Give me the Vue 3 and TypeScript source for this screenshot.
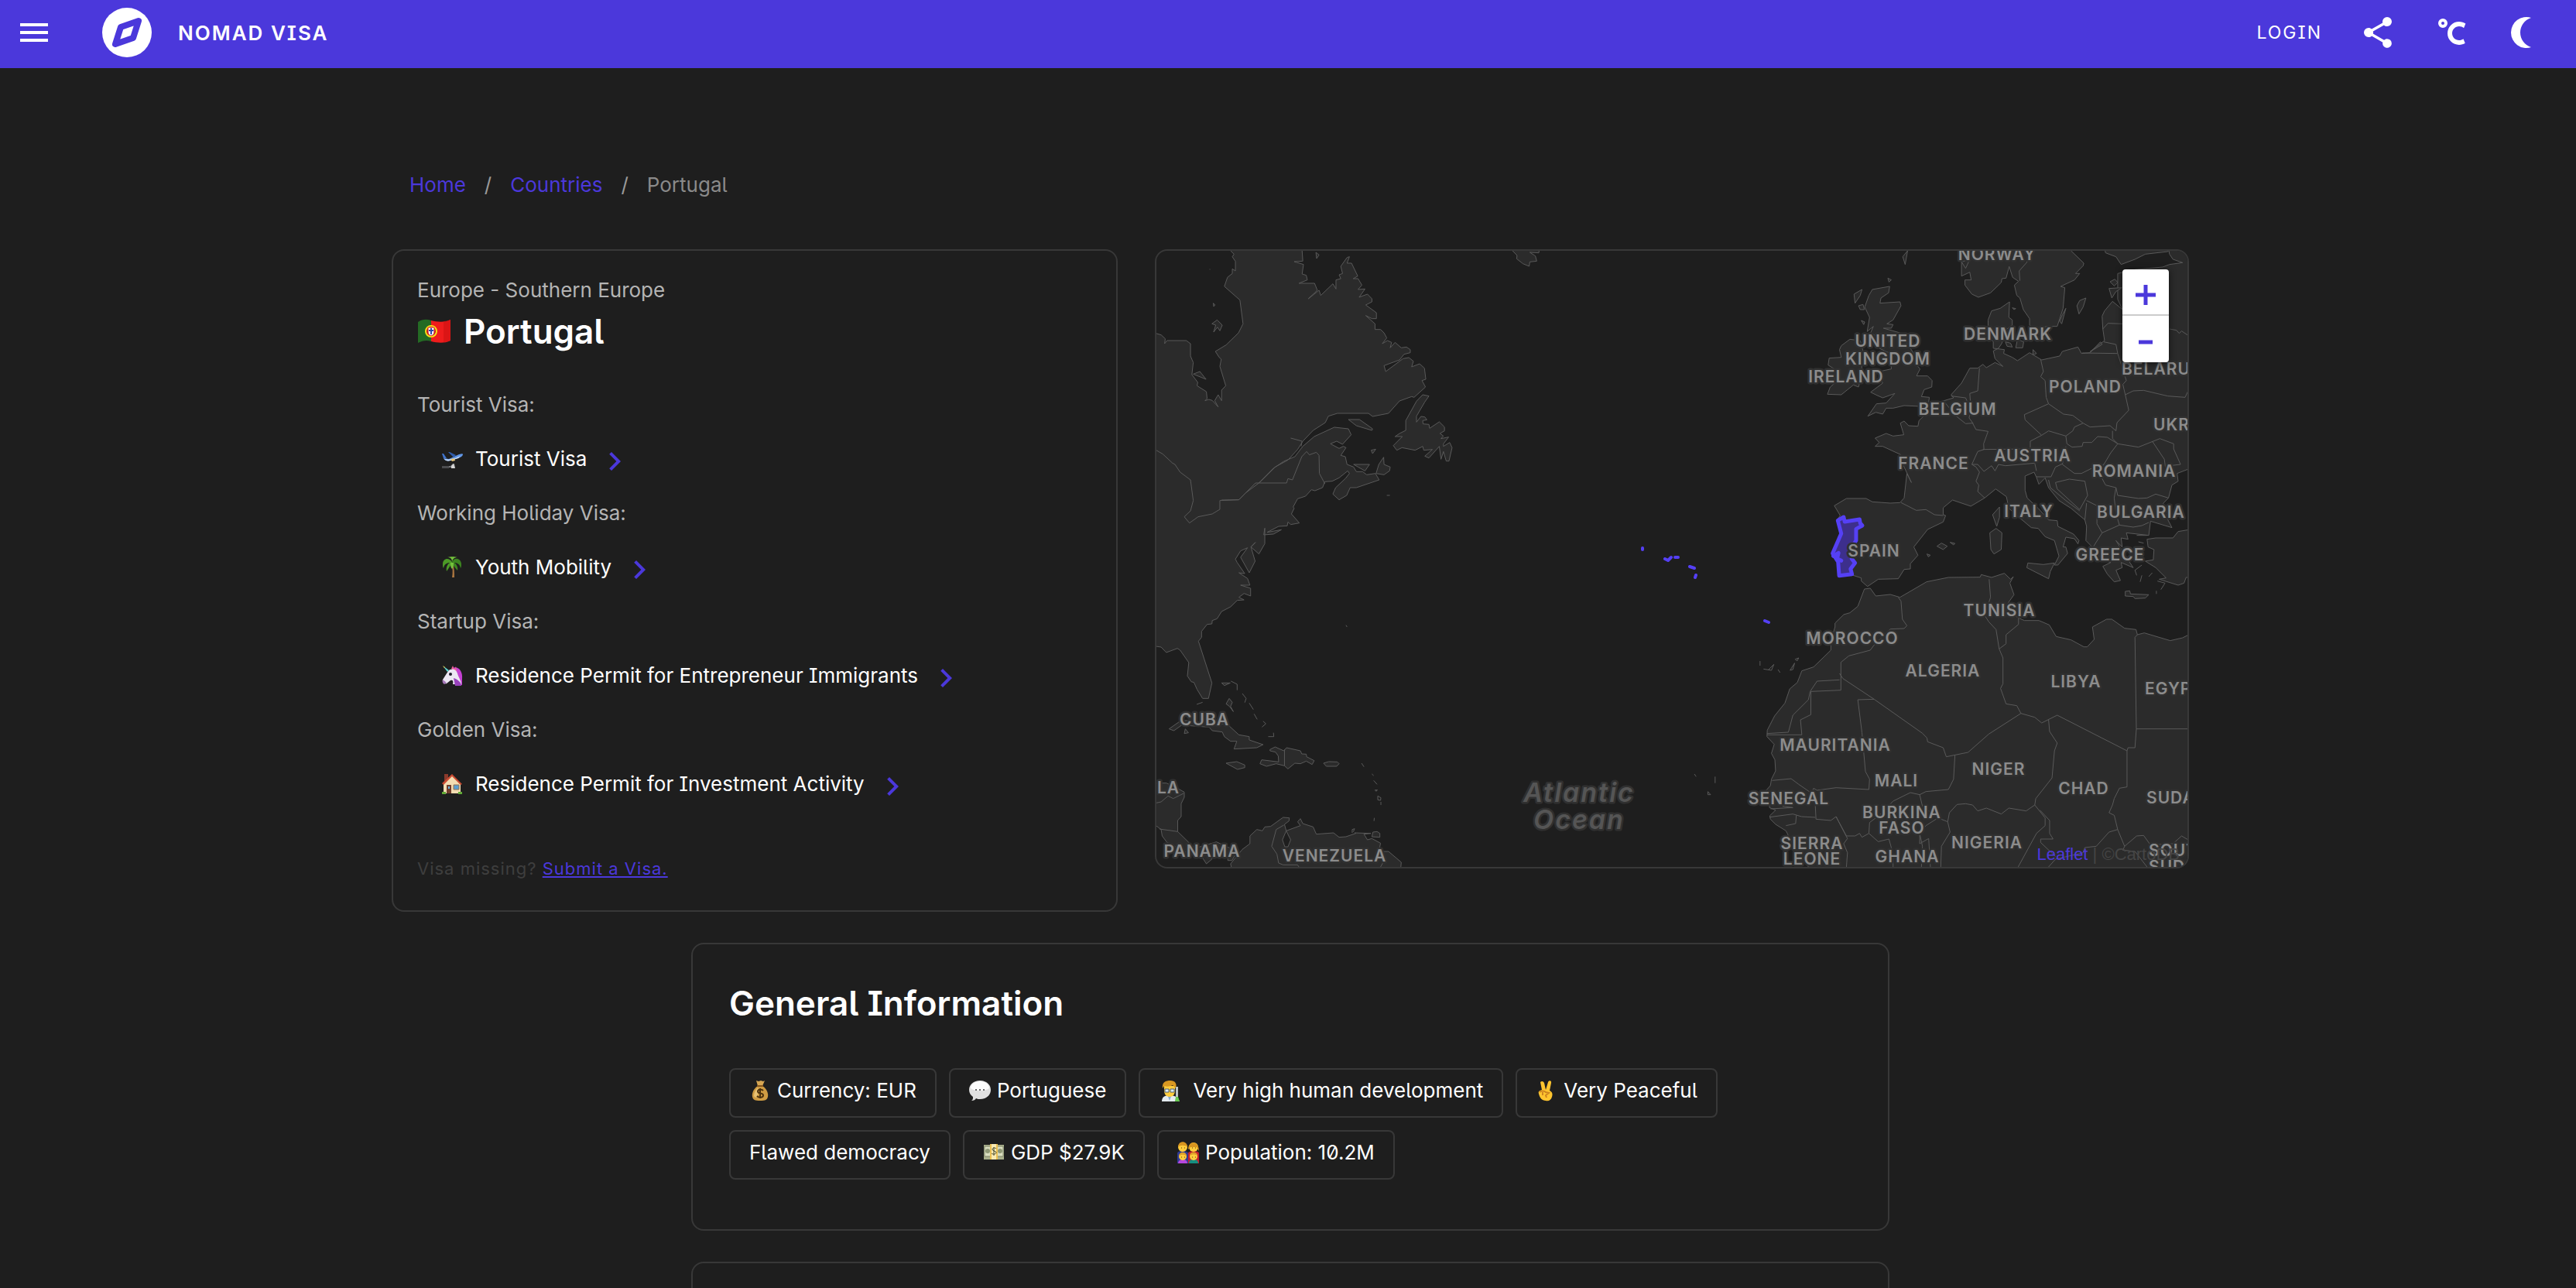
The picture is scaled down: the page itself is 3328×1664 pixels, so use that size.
<script setup lang="ts">
interface Visa {
  group: string
  name: string
  icon: string
}

interface Fact {
  text: string
  icon?: string
  wide?: boolean
}

interface MapLabel {
  text: string
  x: number
  y: number
  start?: boolean
}

const visas: Visa[] = [
  { group: 'Tourist Visa:', name: 'Tourist Visa', icon: 'plane' },
  { group: 'Working Holiday Visa:', name: 'Youth Mobility', icon: 'palm' },
  { group: 'Startup Visa:', name: 'Residence Permit for Entrepreneur Immigrants', icon: 'unicorn' },
  { group: 'Golden Visa:', name: 'Residence Permit for Investment Activity', icon: 'house' },
]

const facts: Fact[] = [
  { text: 'Currency: EUR', icon: 'moneybag' },
  { text: 'Portuguese', icon: 'speech' },
  { text: 'Very high human development', icon: 'scientist', wide: true },
  { text: 'Very Peaceful', icon: 'victory' },
  { text: 'Flawed democracy' },
  { text: 'GDP $27.9K', icon: 'cash' },
  { text: 'Population: 10.2M', icon: 'family' },
]

const labels: MapLabel[] = [
  { text: 'NORWAY', x: 2580, y: 336 },
  { text: 'DENMARK', x: 2594, y: 439 },
  { text: 'UNITED', x: 2439, y: 448 },
  { text: 'KINGDOM', x: 2439, y: 471 },
  { text: 'IRELAND', x: 2385, y: 494 },
  { text: 'BELGIUM', x: 2529, y: 536 },
  { text: 'POLAND', x: 2694, y: 507 },
  { text: 'BELARUS', x: 2741, y: 484, start: true },
  { text: 'UKRAINE', x: 2782, y: 556, start: true },
  { text: 'FRANCE', x: 2498, y: 606 },
  { text: 'AUSTRIA', x: 2626, y: 596 },
  { text: 'ROMANIA', x: 2757, y: 616 },
  { text: 'ITALY', x: 2621, y: 668 },
  { text: 'BULGARIA', x: 2766, y: 669 },
  { text: 'SPAIN', x: 2421, y: 719 },
  { text: 'GREECE', x: 2726, y: 724 },
  { text: 'TUNISIA', x: 2583, y: 796 },
  { text: 'MOROCCO', x: 2393, y: 832 },
  { text: 'ALGERIA', x: 2510, y: 874 },
  { text: 'LIBYA', x: 2682, y: 888 },
  { text: 'EGYPT', x: 2771, y: 897, start: true },
  { text: 'MAURITANIA', x: 2371, y: 970 },
  { text: 'MALI', x: 2450, y: 1016 },
  { text: 'NIGER', x: 2582, y: 1001 },
  { text: 'CHAD', x: 2692, y: 1026 },
  { text: 'SUDAN', x: 2773, y: 1038, start: true },
  { text: 'SENEGAL', x: 2311, y: 1039 },
  { text: 'BURKINA', x: 2457, y: 1057 },
  { text: 'FASO', x: 2457, y: 1077 },
  { text: 'SIERRA', x: 2341, y: 1097 },
  { text: 'LEONE', x: 2341, y: 1117 },
  { text: 'NIGERIA', x: 2567, y: 1096 },
  { text: 'GHANA', x: 2464, y: 1114 },
  { text: 'SOUTH', x: 2776, y: 1106, start: true },
  { text: 'SUDAN', x: 2776, y: 1127, start: true },
  { text: 'CUBA', x: 1556, y: 937 },
  { text: 'LA', x: 1495, y: 1025, start: true },
  { text: 'PANAMA', x: 1553, y: 1107 },
  { text: 'VENEZUELA', x: 1724, y: 1113 },
]

// Landmasses west of the Atlantic, in the western tile's units.
const westLand: string[] = [
  '246,42 256,55 251,65 260,83 260,120 251,112 251,130 237,145 228,180 273,233 282,325 269,360 233,407 202,432 213,455 219,462 215,490 232,565 220,582 220,623 210,600 200,623 210,647 193,622 183,618 172,623 178,615 176,588 149,565 151,552 134,522 138,475 130,450 130,402 118,390 62,390 55,402 57,383 45,368 20,358 20,1573 45,1578 60,1599 92,1583 100,1590 125,1638 121,1690 132,1712 140,1715 149,1742 165,1777 182,1777 192,1717 153,1555 162,1540 162,1517 178,1490 192,1488 193,1475 207,1468 220,1440 246,1422 265,1397 285,1395 270,1385 285,1370 304,1380 304,1350 275,1338 302,1338 295,1312 270,1290 287,1293 265,1250 260,1237 275,1205 295,1193 275,1230 300,1290 317,1245 305,1190 318,1172 305,1190 328,1217 345,1177 345,1117 342,1143 370,1140 393,1123 352,1133 385,1110 410,1108 412,1093 420,1103 445,1097 422,1062 430,1040 427,1035 440,1003 463,993 480,968 490,972 512,960 519,937 540,935 560,922 585,895 590,905 578,925 550,960 542,985 560,1007 582,990 592,960 610,960 676,930 665,905 640,910 628,898 610,898 602,880 583,870 578,840 565,835 580,805 572,800 560,808 535,790 553,780 570,792 595,755 587,732 546,726 488,762 455,800 432,840 400,858 370,885 328,942 345,920 375,880 412,853 440,812 455,780 485,738 520,708 529,683 555,672 645,672 657,684 703,672 735,624 770,607 777,610 810,570 800,545 811,540 807,497 793,480 770,492 775,470 762,456 745,460 695,510 690,487 735,465 748,443 766,437 766,425 755,415 740,418 722,397 708,418 712,397 700,390 685,402 698,380 690,360 680,347 664,347 664,325 637,293 655,305 668,305 668,282 637,252 655,240 655,228 642,210 618,222 635,190 615,192 626,175 615,150 601,150 614,140 596,90 583,90 590,65 583,68 565,102 570,130 560,135 565,150 551,155 551,190 542,170 507,215 502,195 471,228 497,195 489,168 444,168 468,155 465,137 453,132 457,95 430,84 455,82 453,42 453,20 246,20',
  '802,600 820,605 808,628 784,683 784,706 797,684 808,686 814,697 802,700 803,713 820,715 822,730 850,705 865,725 865,740 852,750 862,760 855,770 877,764 862,790 862,800 880,785 887,805 878,857 870,857 862,820 855,850 850,800 820,845 808,838 830,812 805,815 802,800 780,815 742,805 727,815 717,797 743,762 722,762 735,750 753,738 753,700 784,625',
  '587,696 619,696 657,732 655,738 610,720',
  '689,842 690,870 708,880 706,895 690,910 667,905 675,870',
  '602,870 648,870 635,895 615,880',
  '653,815 666,811 657,828',
  '1062,30 1062,42 1075,60 1074,73 1092,92 1110,102 1112,85 1132,82 1128,62 1112,48 1138,50 1140,30',
  '192,325 207,310 222,330 215,352 208,338 197,357 203,330',
  '138,520 157,510 175,540',
  '493,48 502,58 495,72',
  '196,245 201,252 197,258',
  '68,1895 100,1865 120,1862 200,1880 235,1875 270,1918 300,1925 300,1938 340,1956 322,1968 256,1973 264,1943 246,1943 228,1925 222,1907 193,1902 184,1888 150,1885 105,1880 82,1902',
  '115,1895 124,1910 112,1913',
  '233,2028 264,2022 287,2035 287,2045 266,2052',
  '360,1975 375,1965 400,1980 408,1968 448,1980 452,1992 465,1993 466,2003 488,2018 482,2033 465,2020 448,2030 432,2028 412,2050 402,2038 378,2030 350,2040 331,2030 336,2015 385,2023 384,2000 376,1985 360,1980',
  '515,2028 530,2022 555,2023 560,2030 553,2040 523,2040',
  '220,1717 245,1717 228,1727',
  '242,1777 251,1792 246,1808 254,1828 243,1808 233,1798',
  '658,2295 670,2293 678,2300 678,2315 655,2313',
  '20,2105 60,2105 85,2120 112,2140 112,2160 103,2185 103,2235 93,2250 93,2293 125,2335 122,2348 150,2355 205,2333 265,2370 250,2405 238,2405 238,2390 190,2375 192,2400 176,2418 165,2395 120,2375 62,2335 48,2310 45,2285 20,2260',
  '250,2440 246,2418 280,2362 302,2340 302,2310 322,2285 338,2290 345,2275 362,2273 398,2238 416,2240 415,2252 402,2265 407,2290 448,2270 440,2255 448,2243 455,2262 485,2275 494,2303 544,2298 560,2315 580,2313 608,2300 605,2298 652,2300 632,2303 642,2325 655,2320 680,2338 675,2370 703,2370 740,2412 738,2440',
]

const westBorders: string[] = [
  '20,805 31,815 50,830 78,865 85,870 100,900 130,930 138,1010 130,1050 112,1073 127,1097 152,1073 193,1062 215,1044 215,1010 270,1007 318,942 408,942 412,925 425,930 452,840 466,820 474,833 494,823 502,835 503,905 519,945',
  '220,1008 270,1007 290,980 328,942',
  '420,768 453,780 450,800',
  '402,1975 402,2038',
  '280,1758 291,1777 287,1793',
  '265,1745 265,1722 247,1710',
  '300,1795 312,1820',
  '314,1837 323,1858',
  '340,1865 348,1875 337,1888',
  '355,1925 371,1925 370,1910',
  '598,2298 598,2285 605,2282 601,2294',
  '625,2028 632,2042',
  '655,2070 660,2076',
  '660,2095 670,2110',
  '664,2132 671,2132 667,2137 664,2132',
  '672,2155 681,2162 680,2172 672,2170 672,2155',
  '681,2178 681,2190',
  '662,2240 661,2252',
  '148,1800 165,1792',
  '580,1493 583,1500',
  '20,2185 45,2178 65,2155 80,2165 110,2145',
  '40,2283 93,2293',
  '400,2268 378,2285 365,2350 380,2380 385,2415 398,2422 440,2422 448,2440',
  '675,2370 695,2395 680,2430',
  '698,990 707,990',
  '185,114 187,114',
]

// Europe and Africa, in the eastern tile's units.
const eastLand: string[] = [
  '838,20 838,140 862,125 866,155 848,155 848,175 868,210 887,222 922,205 953,165 955,150 967,148 976,103 986,145 1003,160 991,175 998,215 1007,225 1017,270 1035,305 1035,330 1052,350 1070,345 1083,335 1115,335 1132,265 1137,185 1125,180 1165,155 1180,130 1168,130 1190,100 1192,90 1155,42 1155,20',
  '1250,20 1255,50 1285,65 1300,95 1340,75 1370,55 1435,45 1445,20',
  '1435,20 1440,55 1450,75 1478,88 1440,95 1420,105 1340,115 1290,130 1290,230 1304,270 1275,238 1252,275 1245,295 1247,345 1252,390 1210,433 1245,405 1240,395 1210,437 1185,440 1175,415 1130,432 1122,450 1070,465 1035,437 1000,468 985,455 960,440 962,425 930,420 930,395 915,370 915,310 925,275 950,265 977,240 975,300 985,310 985,330 965,350 955,400 945,420 930,430 935,460 958,490 935,475 910,495 900,482 885,497 862,497 838,555 808,600 815,612 770,630 715,700 712,722 685,720 672,702 661,710 671,755 640,760 620,750 588,768 600,785 588,800 610,800 662,832 672,880 693,940 680,905 672,1000 660,1018 632,1020 580,1015 562,1002 505,1002 470,1030 487,1068 478,1085 490,1140 465,1215 480,1245 482,1302 520,1298 548,1310 548,1322 566,1343 597,1315 655,1313 672,1277 690,1275 690,1255 712,1222 700,1190 740,1122 785,1093 792,1068 785,1065 785,1038 812,1008 865,1032 905,1000 937,965 968,995 975,1040 1000,1070 1040,1115 1060,1118 1080,1150 1107,1165 1120,1225 1107,1260 1117,1260 1145,1215 1140,1190 1132,1190 1140,1152 1165,1158 1175,1178 1178,1165 1162,1140 1117,1110 1115,1088 1090,1085 1060,1040 1028,1000 1022,970 1022,915 1048,900 1055,920 1062,947 1080,922 1090,960 1120,1010 1155,1040 1195,1085 1200,1110 1198,1165 1220,1195 1245,1240 1270,1250 1247,1265 1260,1295 1280,1325 1298,1320 1285,1280 1303,1270 1300,1250 1335,1270 1315,1230 1285,1165 1303,1190 1300,1155 1320,1160 1315,1135 1380,1145 1385,1090 1447,1115 1420,1045 1422,1020 1437,1000 1447,950 1465,935 1462,905 1510,880 1510,20',
  '1510,1120 1465,1130 1450,1155 1400,1155 1375,1160 1378,1190 1395,1200 1393,1240 1370,1245 1400,1270 1430,1310 1410,1315 1465,1338 1482,1330 1488,1308 1510,1308',
  '1027,1270 1030,1252 1075,1258 1107,1252 1095,1285 1090,1313',
  '920,1135 938,1118 955,1135 953,1200 932,1217 923,1200',
  '928,1065 948,1035 948,1075 940,1110',
  '1312,1362 1325,1360 1327,1372 1380,1375 1370,1388 1340,1390 1335,1382 1312,1380',
  '767,1187 780,1175 797,1187 785,1200',
  '805,1172 819,1176 815,1182',
  '738,1217 748,1222 742,1228',
  '1172,255 1180,235 1198,225 1190,260 1178,287',
  '1128,325 1140,265 1130,290 1122,315',
  '1268,162 1282,152 1290,165 1280,178',
  '1265,188 1302,185 1285,200 1273,225',
  '1000,385 1018,395 1015,418 995,418',
  '965,395 980,400 985,415 970,412',
  '985,263 995,266 990,270',
  '1045,425 1055,440 1045,445',
  '580,192 630,180 627,205 605,225 602,245 660,240 663,255 640,310 622,325 640,328 635,342 612,342 660,360 700,440 705,480 718,500 708,527 740,527 753,545 752,570 730,580 722,607 745,610 742,635 720,645 672,642 640,652 620,652 610,675 590,668 567,683 592,635 620,632 645,595 610,612 590,600 575,590 610,555 605,540 600,510 635,500 632,440 600,420 600,380 575,360 583,335 565,355 572,300 558,260 570,215',
  '490,410 515,385 545,390 553,430 550,480 548,530 540,570 525,562 490,600 450,598 458,570 480,545 455,530 470,500 452,485 455,458 490,455 485,425',
  '527,210 550,192 545,215 530,245',
  '540,255 553,250 557,270 545,270',
  '548,312 558,318 555,328',
  '668,65 682,42 675,95',
  '625,148 635,155 628,163',
  '838,85 862,75 850,110',
  '557,1353 574,1350 590,1380 632,1374 660,1385 737,1325 800,1308 892,1307 895,1297 925,1308 962,1292 980,1315 988,1305 978,1330 990,1375 970,1412 985,1450 1003,1465 1020,1475 1062,1475 1092,1492 1112,1537 1155,1550 1192,1577 1202,1577 1222,1548 1217,1500 1258,1470 1273,1470 1310,1505 1343,1510 1347,1530 1367,1523 1442,1553 1478,1542 1510,1520 1510,2440 400,2440 380,2400 345,2330 330,2290 300,2265 285,2245 283,2232 300,2210 282,2200 288,2150 268,2140 285,2115 288,2090 300,2058 298,2015 288,1990 296,1955 275,1925 276,1900 297,1845 327,1795 341,1740 363,1715 376,1670 410,1655 460,1590 460,1555 472,1500 472,1485 497,1452 515,1445 538,1420',
]

const eastBorders: string[] = [
  '1050,42 1025,90 1005,120 1007,158',
  '663,1018 707,1048 735,1045 760,1065 785,1068',
  '905,1000 885,975 888,950 880,935 890,900 880,880 868,870 885,820 903,812 902,790 915,742 880,735 870,710 850,712 820,680 790,630',
  '890,497 885,585 862,595 865,650 860,690 872,712',
  '808,605 850,612 862,650',
  '1067,462 1075,510 1067,530 1080,545 1083,610 1090,635 1020,677 1022,697 1070,757 1090,740 1140,760 1160,740 1165,725 1190,710 1160,680 1133,675 1090,635',
  '1190,710 1210,725 1268,720 1285,740 1288,708 1322,660 1312,600 1305,560 1315,545 1290,440 1187,438',
  '1312,600 1335,585 1365,583 1435,605 1485,610 1494,585',
  '1070,757 1037,780 1037,810 900,812',
  '868,870 885,870 903,897 925,875 935,895 945,870 965,875 1050,865 1055,895',
  '1140,760 1143,790 1158,803 1187,800 1190,785 1215,785 1232,762 1260,765 1290,790 1350,803 1412,770 1452,790 1452,810 1472,870 1440,875',
  '1390,780 1425,850 1430,900',
  '1275,740 1275,770 1290,790 1270,825 1250,870 1215,885 1185,905 1165,905 1130,870 1140,800',
  '1055,918 1097,918 1110,880 1130,868',
  '1110,940 1150,927 1195,935 1203,990 1180,1045 1115,965 1110,940',
  '1090,930 1095,960 1140,1010 1180,1050',
  '1250,870 1235,900 1255,950 1285,960 1290,990 1350,1002 1375,1000 1400,985 1437,1000',
  '1285,960 1280,1000 1285,1060 1295,1105 1245,1135 1220,1188',
  '1200,1010 1230,1030 1230,1100 1245,1135',
  '1195,1085 1200,1020',
  '1295,1105 1335,1113 1360,1107 1380,1095',
  '1247,345 1262,323 1304,325',
  '1250,395 1285,405 1290,440',
  '1440,345 1460,350 1468,362 1475,353 1494,370',
  '655,1385 663,1400 667,1470 680,1495 672,1506 632,1508 585,1570 574,1590 512,1612 489,1637 489,1745 402,1750 402,1840 372,1860 376,1918 275,1918',
  '485,1705 420,1710 400,1750 395,1782 350,1842 337,1908 275,1913',
  '485,1680 495,1700 585,1780 725,1912 738,1930 740,1945 785,1968 794,2003 857,1986 917,1915 1010,1835 998,1805 967,1798 951,1738 958,1720 958,1620 947,1585 938,1510 917,1480 905,1455 922,1385 918,1315',
  '1003,1465 1003,1490 967,1530 967,1565 947,1585',
  '585,1780 538,1782 550,1910 560,2060 572,2090 570,2130 475,2123 420,2133 410,2125 405,2145 367,2110 345,2088 290,2095',
  '819,1998 815,2090 800,2130 735,2138 717,2150 690,2142 640,2175 600,2230 572,2258 570,2300 550,2315 543,2300 530,2310 505,2310 475,2235 460,2250 417,2245 415,2195 405,2145',
  '283,2237 350,2225 375,2235 415,2238',
  '285,2205 350,2200 320,2195',
  '360,2230 358,2262 330,2270',
  '475,2235 508,2320 497,2340 508,2375 505,2430',
  '570,2300 597,2332 628,2322 640,2380 640,2430',
  '717,2150 725,2195 770,2240 798,2255 805,2295 780,2350 778,2430',
  '798,2255 803,2220 825,2188 850,2185 870,2190 885,2213 910,2202 953,2225 975,2202 1025,2213 1050,2190 1053,2165 1100,2085 1107,1980 1115,1950 1093,1905 1090,1860',
  '770,2240 735,2270 717,2300 717,2340 743,2320 748,2430',
  '717,2300 725,2350 722,2430',
  '1010,1835 1050,1850 1070,1872 1115,1842 1317,1980 1320,1968 1340,1968 1344,1895 1494,1895',
  '1344,1895 1340,1540 1347,1530',
  '1317,1980 1317,2120 1295,2125 1280,2165 1275,2190 1265,2220 1280,2230 1290,2285 1265,2295 1228,2350 1195,2355 1190,2375 1110,2400 1090,2430',
  '1290,2285 1310,2350 1305,2365 1340,2370 1375,2430',
  '1050,2190 1080,2240 1080,2270 1055,2300 1002,2430',
  '1065,2210 1093,2250 1093,2300 1103,2322 1067,2322 1067,2335 1110,2390',
  '1310,2350 1345,2310 1365,2308 1385,2345 1450,2340 1475,2310 1494,2325',
  '255,1632 255,1650',
  '280,1665 295,1645 288,1668 265,1663',
  '307,1665 313,1677',
  '342,1668 355,1640 350,1665 342,1668',
  '357,1625 367,1620 362,1632 357,1625',
  '65,2070 70,2080',
  '104,2138 112,2150 104,2150 104,2138',
  '125,2080 125,2105',
  '1345,1300 1340,1280 1360,1260',
  '1355,1325 1360,1300',
  '1380,1305 1390,1290',
  '1415,1355 1427,1330 1405,1322',
  '1402,1360 1402,1372',
  '1345,1145 1375,1145',
  '1350,1170 1365,1175',
]
</script>

<template>
  <div class="page">
    <svg class="sprites" width="0" height="0" aria-hidden="true">
      <symbol id="plane" viewBox="0 0 28 28">
        <path d="M1 23h11l3-3h2l1 5H1z" fill="#77787a" />
        <path d="M1 23h9v3H1z" fill="#4c4d50" />
        <path d="M13 23l3-3 2 6h-5z" fill="#d6d6d6" />
        <path d="M3 13l7 1 13-6c3-1 5-1 5 0 0 2-3 4-6 5l-10 3c-4 1-8 0-9-3z" fill="#5f95e6" />
        <path d="M4 14c3 1 9 1 14-1l7-3-3 3-10 3c-4 1-7 0-8-2z" fill="#cfe0f7" />
        <path d="M1 7l2 0 4 6-4 0z" fill="#3f73cc" />
        <path d="M12 8l-3-3 2 0 8 4-3 3z" fill="#2f5cab" />
        <path d="M12 14l2 3 4-1-1-3z" fill="#e7c77d" />
      </symbol>
      <symbol id="palm" viewBox="0 0 28 28">
        <path d="M13 9c2 6 2 12 1 18h3c0-6 0-12-2-18z" fill="#a8743f" />
        <path d="M14 7C10 1 3 2 2 9c0 3 0 5 1 6 1-5 4-7 8-7-3 2-5 6-4 11 3-4 5-8 7-11z" fill="#4c9a27" />
        <path d="M14 7c3-7 11-5 12 2 0 3 0 5-1 6-1-5-4-7-8-7 3 2 5 6 4 10-3-3-6-7-7-11z" fill="#3c8420" />
        <path d="M8 1c4 0 6 2 6 6 1-4 3-6 7-6-3-1-10-1-13 0zM12 8c0 4 0 6 2 8 2-2 2-5 2-8z" fill="#74c23c" />
      </symbol>
      <symbol id="unicorn" viewBox="0 0 28 28">
        <path d="M14 4c9-3 14 5 13 14v8h-7l-5-9z" fill="#c440d2" />
        <path d="M13 5l2-4 2 5 2-4 1 6z" fill="#ee6098" />
        <path d="M9 8c4-4 10-3 12 3 1 5 5 9 5 14H15c1-4 0-6-3-5l-5 4c-3 1-6-2-5-5z" fill="#ece6f3" />
        <path d="M2 19l5 4-3 2c-2-1-3-3-2-6z" fill="#a678ba" />
        <path d="M16 17c6 2 10 6 10 10h-8z" fill="#9842bc" />
        <path d="M8 9L2 1l8 6z" fill="#61d6d1" />
        <path d="M2 1l3 2-1 1z" fill="#f3cb41" />
        <circle cx="12" cy="12" r="2" fill="#201b2e" />
      </symbol>
      <symbol id="house" viewBox="0 0 28 28">
        <path d="M4 1h5v10H4z" fill="#8b3a2c" />
        <path d="M3 12l11-9 11 10v13H3z" fill="#f3ddb3" />
        <path d="M1 13L14 1l13 13-2 1L14 4 3 15z" fill="#ca4b32" />
        <path d="M7 15h6v11H7z" fill="#713d2c" />
        <path d="M9 17h2v3H9z" fill="#69b5df" />
        <path d="M16 15h7v6h-7z" fill="#589ed2" stroke="#93704f" />
        <path d="M1 24h5v3H1zM22 24h5v3h-5z" fill="#62aa37" />
      </symbol>
      <symbol id="moneybag" viewBox="0 0 28 28">
        <path d="M9 1l3 1 3-1 3 1 2-1-3 7h-6z" fill="#d6a653" />
        <path d="M11 8h6c5 3 8 9 7 14-1 4-3 5-10 5S5 26 4 22c-1-5 2-11 7-14z" fill="#cf9c43" />
        <path d="M11 10c-3 3-5 7-5 11 2 3 4 2 5-1z" fill="#e8c274" />
        <path d="M10 8h8" stroke="#86561d" stroke-width="2" />
        <path d="M18 14c-2-2-7-2-7 1 0 4 7 1 7 5 0 3-5 4-8 1M14 11v13" fill="none" stroke="#4b310e" stroke-width="2" />
      </symbol>
      <symbol id="speech" viewBox="0 0 28 28">
        <path d="M14 1c8 0 14 5 14 12s-6 12-14 12c-2 0-3 0-5-1-1 2-3 3-6 3 2-1 2-3 2-5-3-2-5-5-5-9C0 6 6 1 14 1z" fill="#e0e0e0" />
        <path d="M14 2c7 0 12 4 12 9-5 4-19 4-24 0 0-5 5-9 12-9z" fill="#fbfbfb" />
        <circle cx="9" cy="13" r="1" fill="#373737" /><circle cx="14" cy="13" r="1" fill="#373737" /><circle cx="19" cy="13" r="1" fill="#373737" />
      </symbol>
      <symbol id="scientist" viewBox="0 0 28 28">
        <path d="M4 28c0-6 4-8 10-8s11 2 11 8z" fill="#e4ebef" />
        <path d="M11 19h6l-3 8z" fill="#82a8ce" />
        <path d="M7 8h14v6c0 5-3 8-7 8s-7-3-7-8z" fill="#ffcd3d" />
        <path d="M5 11C4 3 9 1 15 1c6 0 9 4 7 10l-4-4c-4 2-8 2-11 1z" fill="#d99822" />
        <path d="M8 12h5v4H8zM15 12h5v4h-5z" fill="#ddedf6" stroke="#4d6176" />
        <path d="M22 9h3v15l2 4h-6l1-4z" fill="#bcc4c8" />
        <path d="M22 22h3l2 6h-6z" fill="#67cb51" />
      </symbol>
      <symbol id="victory" viewBox="0 0 28 28">
        <path d="M6 3c2-2 4-1 5 1l2 9 3-10c1-3 5-2 4 1l-2 10c4 2 4 5 3 8-1 4-4 6-8 5-5 0-8-4-9-9-1-3 1-4 4-5z" fill="#ffc52f" />
        <path d="M5 16c2-2 6-2 8 0l4 1-4 3 1 3M9 16v4" fill="none" stroke="#ce8520" stroke-width="2" />
      </symbol>
      <symbol id="cash" viewBox="0 0 28 28">
        <path d="M1 4h26v19H1z" fill="#aab08c" />
        <path d="M2 6h24v13H2z" fill="#dadec0" stroke="#7e8668" />
        <circle cx="6" cy="12" r="3" fill="#8f9875" /><circle cx="22" cy="12" r="3" fill="#8f9875" />
        <path d="M9 3h10v20H9z" fill="#ecc052" />
        <path d="M11 3h6v20h-6z" fill="#f9eab2" />
        <path d="M17 9c-2-2-5-1-5 1s5 2 5 4-4 3-6 1M14 7v11" fill="none" stroke="#44492e" stroke-width="1" />
      </symbol>
      <symbol id="family" viewBox="0 0 28 28">
        <path d="M0 28V15c0-4 14-4 14 0v13z" fill="#2f3b93" />
        <path d="M14 28V15c0-4 14-4 14 0v13z" fill="#c4202d" />
        <circle cx="7" cy="7" r="6" fill="#ffcd3d" /><circle cx="21" cy="7" r="6" fill="#ffcd3d" />
        <path d="M1 7c0-9 12-9 12 0-2-3-10-3-12 0zM14 10c0-12 14-12 14 2l-3-5c-3 0-6 0-8 0z" fill="#d8951f" />
        <path d="M1 28c0-7 12-7 12 0z" fill="#b747dc" />
        <path d="M15 28c0-7 12-7 12 0z" fill="#168e80" />
        <circle cx="7" cy="19" r="5" fill="#ffcd3d" /><circle cx="21" cy="19" r="5" fill="#ffcd3d" />
        <path d="M2 19c0-7 10-7 10 0-3-3-7-3-10 0zM16 18c0-6 10-6 10 0-3-2-7-2-10 0z" fill="#dfa02a" />
        <path d="M5 8h1M9 8h1M19 8h1M23 8h1M5 20h1M9 20h1M19 20h1M23 20h1" stroke="#5b3a12" stroke-width="1" />
      </symbol>
    </svg>

    <header class="topbar">
      <button class="icon-button" type="button" aria-label="Menu">
        <svg viewBox="0 0 24 24"><path d="M3,6H21V8H3V6M3,11H21V13H3V11M3,16H21V18H3V16Z" /></svg>
      </button>
      <a class="brand" href="#">
        <svg class="logo" viewBox="0 0 64 64" aria-hidden="true">
          <circle cx="32" cy="32" r="32" fill="#fff" />
          <path d="M47 17L24 25L17 47L40 39Z" fill="#fff" stroke="#4b38db" stroke-width="8" stroke-linejoin="round" />
        </svg>
        <span>NOMAD VISA</span>
      </a>
      <nav class="actions">
        <button class="login" type="button">LOGIN</button>
        <button class="icon-button" type="button" aria-label="Share">
          <svg viewBox="0 0 24 24"><path d="M18,16.08C17.24,16.08 16.56,16.38 16.04,16.85L8.91,12.7C8.96,12.47 9,12.24 9,12C9,11.76 8.96,11.53 8.91,11.3L15.96,7.19C16.5,7.69 17.21,8 18,8A3,3 0 0,0 21,5A3,3 0 0,0 18,2A3,3 0 0,0 15,5C15,5.24 15.04,5.47 15.09,5.7L8.04,9.81C7.5,9.31 6.79,9 6,9A3,3 0 0,0 3,12A3,3 0 0,0 6,15C6.79,15 7.5,14.69 8.04,14.19L15.16,18.34C15.11,18.55 15.08,18.77 15.08,19C15.08,20.61 16.39,21.91 18,21.91C19.61,21.91 20.92,20.61 20.92,19A2.92,2.92 0 0,0 18,16.08Z" /></svg>
        </button>
        <button class="icon-button" type="button" aria-label="Temperature unit">
          <svg viewBox="0 0 24 24"><path d="M16.5,5C18.05,5 19.5,5.47 20.69,6.28L19.53,9.17C18.73,8.44 17.67,8 16.5,8C14,8 12,10 12,12.5C12,15 14,17 16.5,17C17.53,17 18.47,16.66 19.23,16.08L20.37,18.93C19.24,19.61 17.92,20 16.5,20A7.5,7.5 0 0,1 9,12.5A7.5,7.5 0 0,1 16.5,5M6,3A3,3 0 0,1 9,6A3,3 0 0,1 6,9A3,3 0 0,1 3,6A3,3 0 0,1 6,3M6,5A1,1 0 0,0 5,6A1,1 0 0,0 6,7A1,1 0 0,0 7,6A1,1 0 0,0 6,5Z" /></svg>
        </button>
        <button class="icon-button" type="button" aria-label="Dark mode">
          <svg viewBox="0 0 24 24"><path d="M2 12A10 10 0 0 0 15 21.54A10 10 0 0 1 15 2.46A10 10 0 0 0 2 12Z" /></svg>
        </button>
      </nav>
    </header>

    <main class="content">
      <nav class="crumbs" aria-label="Breadcrumb">
        <a href="#">Home</a>
        <span>/</span>
        <a href="#">Countries</a>
        <span>/</span>
        <span class="current">Portugal</span>
      </nav>

      <div class="overview">
        <section class="card country">
          <p class="region">Europe - Southern Europe</p>
          <h1>
            <svg class="flag" viewBox="0 0 44 32" aria-hidden="true">
              <path d="M1 4C7 0 12 0 18 2v27C12 27 7 28 1 31z" fill="#246b24" />
              <path d="M18 2c8 2 17 3 25-1v27c-8 4-17 3-25 1z" fill="#ee1c1c" />
              <path d="M34 3c3 0 6-1 9-2v27c-3 1-6 2-9 2z" fill="#cf1010" opacity=".6" />
              <circle cx="18" cy="16" r="7" fill="#c4141c" stroke="#f7e017" stroke-width="2" />
              <path d="M14 11h8v6c0 3-2 4-4 5-2-1-4-2-4-5z" fill="#fff" stroke="#d5202a" />
              <path d="M18 12v8M15 15h6" stroke="#2b4aa8" stroke-width="2" />
            </svg>
            Portugal
          </h1>
          <dl class="visas">
            <template v-for="visa in visas" :key="visa.group">
              <dt>{{ visa.group }}</dt>
              <dd>
                <a href="#">
                  <svg class="emoji" aria-hidden="true"><use :href="'#' + visa.icon" /></svg>
                  <span>{{ visa.name }}</span>
                  <svg class="chevron" viewBox="0 0 24 24" aria-hidden="true"><path d="M8.59,16.58L13.17,12L8.59,7.41L10,6L16,12L10,18L8.59,16.58Z" /></svg>
                </a>
              </dd>
            </template>
          </dl>
          <p class="missing">Visa missing? <a href="#">Submit a Visa.</a></p>
        </section>

        <section class="card map" aria-label="Map">
          <svg class="world" viewBox="1494 324 1332 796">
            <g transform="translate(1480 310) scale(.446429 .333333)">
              <polygon v-for="(shape, i) in westLand" :key="'w' + i" class="land" :points="shape" />
              <polygon class="lake" points="407,2290 396,2325 403,2352 412,2352 420,2325" />
              <polyline v-for="(line, i) in westBorders" :key="'wb' + i" class="border" :points="line" />
            </g>
            <g transform="translate(2160 310) scale(.446429 .333333)">
              <polygon v-for="(shape, i) in eastLand" :key="'e' + i" class="land" :points="shape" />
              <polyline v-for="(line, i) in eastBorders" :key="'eb' + i" class="border" :points="line" />
              <polygon class="selected" points="480,1087 497,1074 500,1092 543,1083 545,1098 551,1107 533,1120 533,1165 525,1180 520,1235 530,1252 517,1275 521,1295 484,1301 481,1248 465,1215 490,1138" />
              <polyline class="selected-line" points="467,1225 482,1213 478,1235 490,1243" />
            </g>
            <path class="selected-line islands" d="M2122 708v2M2151 722l4 2 4-4M2164 720h4M2183 732l6 2M2191 743l-1 3M2280 802l5 2" />
            <g class="labels">
              <text v-for="label in labels" :key="label.text + label.y" :x="label.x" :y="label.y" :text-anchor="label.start ? 'start' : 'middle'">{{ label.text }}</text>
            </g>
            <g class="ocean">
              <text x="2040" y="1036" text-anchor="middle">Atlantic</text>
              <text x="2040" y="1071" text-anchor="middle">Ocean</text>
            </g>
          </svg>
          <div class="zoom">
            <button type="button" aria-label="Zoom in"><svg viewBox="0 0 28 28"><path d="M14 1v26M1 14h26" /></svg></button>
            <button type="button" aria-label="Zoom out"><svg viewBox="0 0 28 28"><path d="M5 14h18" /></svg></button>
          </div>
          <p class="credit"><a href="#">Leaflet</a> | ©CartoDB</p>
        </section>
      </div>

      <section class="card info">
        <h2>General Information</h2>
        <ul class="facts">
          <li v-for="fact in facts" :key="fact.text">
            <svg v-if="fact.icon" class="emoji" :class="{ wide: fact.wide }" aria-hidden="true"><use :href="'#' + fact.icon" /></svg>
            <span>{{ fact.text }}</span>
          </li>
        </ul>
      </section>

      <section class="card info next"></section>
    </main>
  </div>
</template>

<style>
body {
  margin: 0;
  background: #1e1e1e;
}
</style>

<style scoped>
.page {
  height: 100vh;
  overflow: hidden;
  background: #1e1e1e;
  color: #fff;
  font-family: Inter, "Noto Sans", sans-serif;
  font-size: 26px;
  font-feature-settings: "cv05", "cv08", "zero";
}

.sprites {
  position: absolute;
}

a {
  color: #4b38db;
  text-decoration: none;
}

p,
h1,
h2,
ul,
dl,
dd {
  margin: 0;
  padding: 0;
}

button {
  padding: 0;
  border: 0;
  background: none;
  color: inherit;
  font: inherit;
  font-feature-settings: inherit;
}

.topbar {
  display: flex;
  align-items: center;
  box-sizing: border-box;
  height: 88px;
  padding: 0 40px 4px 20px;
  background: #4b38db;
}

.icon-button {
  width: 48px;
  height: 48px;
}

.icon-button svg {
  display: block;
  fill: #fff;
}

.brand {
  display: flex;
  align-items: center;
  gap: 34px;
  margin-left: 64px;
  color: #fff;
  font-weight: 600;
  letter-spacing: 2px;
}

.logo {
  width: 64px;
  height: 64px;
}

.actions {
  display: flex;
  align-items: center;
  gap: 48px;
  margin-left: auto;
}

.login {
  font-size: 23px;
  letter-spacing: 2px;
}

.content {
  max-width: 2322px;
  margin: 0 auto;
  padding: 127px 0 0 6px;
}

.crumbs {
  display: flex;
  gap: 24px;
  padding-left: 23px;
  line-height: 48px;
  color: #9a9a9a;
}

.crumbs .current {
  color: #8a8a8a;
}

.card {
  box-sizing: border-box;
  border: 2px solid #383838;
  border-radius: 16px;
}

.overview {
  display: grid;
  grid-template-columns: 938fr 1336fr;
  gap: 48px;
  align-items: start;
  margin-top: 59px;
}

.country {
  padding: 31px 31px 34px;
}

.region {
  line-height: 40px;
  color: #b4b4b4;
}

h1,
h2 {
  font-size: 44px;
  font-weight: 600;
  line-height: 64px;
}

h1 {
  display: flex;
  align-items: center;
  gap: 16px;
  margin: 1px 0 28px;
}

.flag {
  width: 44px;
  height: 32px;
}

.visas {
  line-height: 70px;
}

dt {
  color: #b4b4b4;
}

dd {
  padding-left: 31px;
}

dd a {
  display: flex;
  align-items: center;
  height: 70px;
  color: #fff;
}

.emoji {
  flex: none;
  width: 28px;
  height: 28px;
}

dd .emoji {
  margin-right: 16px;
}

.chevron {
  width: 48px;
  height: 48px;
  margin: 6px 0 0 12px;
  fill: #4b38db;
}

.missing {
  margin-top: 54px;
  font-size: 22px;
  line-height: 40px;
  letter-spacing: 1px;
  color: #3e3e3e;
}

.missing a {
  text-decoration: underline;
}

.map {
  position: relative;
  overflow: hidden;
}

.world {
  display: block;
  width: 100%;
}

.land,
.lake,
.border {
  stroke: #5a5a5a;
  stroke-width: 1px;
  vector-effect: non-scaling-stroke;
}

.land {
  fill: #2b2b2b;
}

.lake {
  fill: #1e1e1e;
}

.border {
  fill: none;
}

.selected,
.selected-line {
  stroke: #5540f5;
  stroke-width: 5px;
  stroke-linecap: round;
  stroke-linejoin: round;
  vector-effect: non-scaling-stroke;
}

.selected {
  fill: #3d2f8c;
}

.selected-line {
  fill: none;
}

.islands {
  stroke-width: 4px;
}

.labels text,
.ocean text {
  stroke: #303030;
  stroke-width: 5px;
  stroke-linejoin: round;
  paint-order: stroke;
  font-feature-settings: normal;
}

.labels {
  font-size: 21px;
  font-weight: 600;
  letter-spacing: 1px;
  fill: #8c8c8c;
}

.ocean {
  font-size: 34px;
  font-style: italic;
  font-weight: 600;
  letter-spacing: 2px;
  fill: #555;
}

.zoom {
  position: absolute;
  top: 24px;
  right: 24px;
  width: 60px;
  border-radius: 4px;
  background: #fff;
  box-shadow: 0 1px 8px #111;
}

.zoom button {
  display: flex;
  align-items: center;
  justify-content: center;
  box-sizing: border-box;
  width: 100%;
  height: 60px;
  padding-top: 8px;
}

.zoom button:first-child {
  border-bottom: 2px solid #ccc;
}

.zoom svg {
  width: 28px;
  height: 28px;
  stroke: #4b38db;
  stroke-width: 5px;
}

.credit {
  position: absolute;
  right: 10px;
  bottom: 0;
  font-family: "Liberation Sans", sans-serif;
  font-size: 22px;
  line-height: 32px;
  color: #454545;
}

.info {
  width: 66.67%;
  margin: 40px auto 0;
  padding: 44px 47px 64px;
}

.next {
  height: 372px;
}

h2 {
  margin-bottom: 52px;
}

.facts {
  display: flex;
  flex-wrap: wrap;
  gap: 16px;
  list-style: none;
}

.facts li {
  display: flex;
  align-items: center;
  padding: 0 24px 6px;
  border: 2px solid #383838;
  border-radius: 8px;
  line-height: 54px;
}

.facts .emoji {
  margin-right: 8px;
}

.facts .wide {
  margin-right: 16px;
}
</style>
